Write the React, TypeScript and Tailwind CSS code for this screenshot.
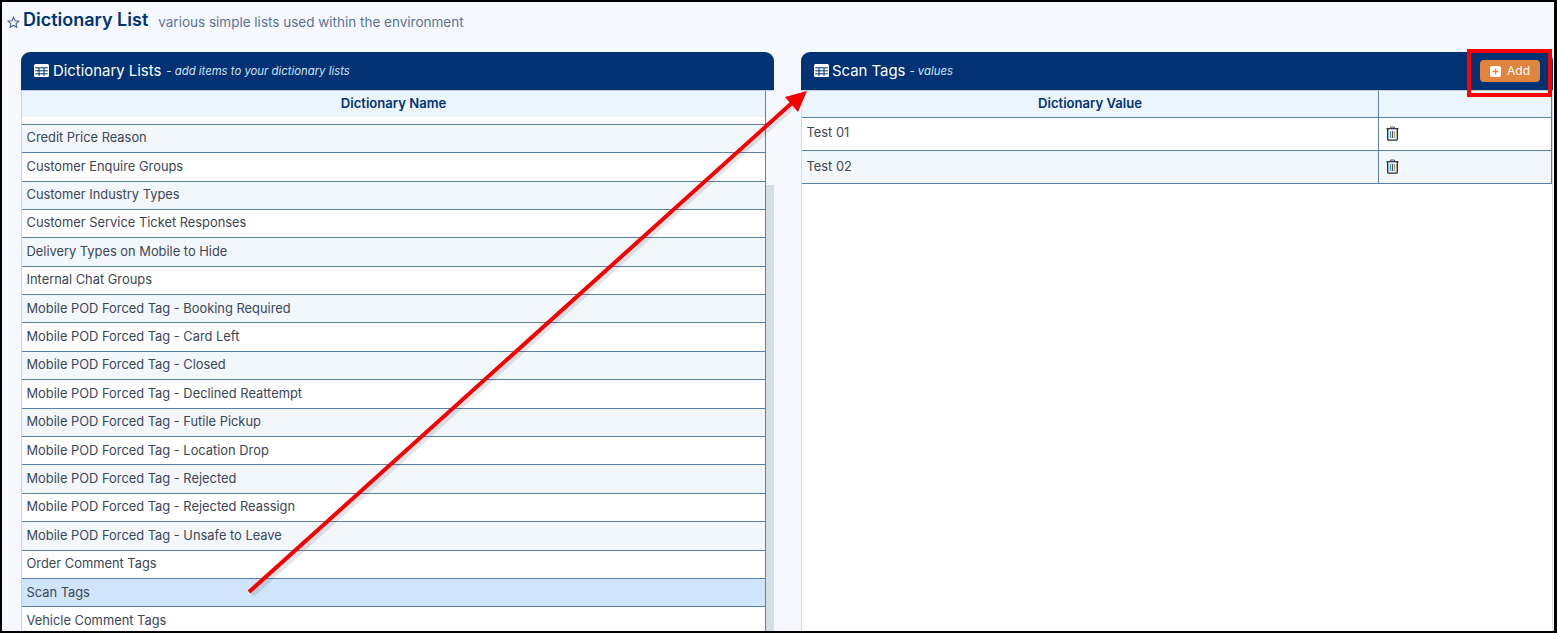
const rows = [
  "Credit Price Reason",
  "Customer Enquire Groups",
  "Customer Industry Types",
  "Customer Service Ticket Responses",
  "Delivery Types on Mobile to Hide",
  "Internal Chat Groups",
  "Mobile POD Forced Tag - Booking Required",
  "Mobile POD Forced Tag - Card Left",
  "Mobile POD Forced Tag - Closed",
  "Mobile POD Forced Tag - Declined Reattempt",
  "Mobile POD Forced Tag - Futile Pickup",
  "Mobile POD Forced Tag - Location Drop",
  "Mobile POD Forced Tag - Rejected",
  "Mobile POD Forced Tag - Rejected Reassign",
  "Mobile POD Forced Tag - Unsafe to Leave",
  "Order Comment Tags",
  "Scan Tags",
  "Vehicle Comment Tags",
];

function TableIcon() {
  return (
    <svg width="15" height="13" viewBox="0 0 15 13" className="shrink-0 -mt-[2px]" fill="none">
      <rect x="0" y="0" width="15" height="13" rx="1.5" fill="#ffffff" />
      <path d="M1.2 3.8H13.8M1.2 6.8H13.8M1.2 9.8H13.8M5 3.8V12M10 3.8V12" stroke="#003274" strokeWidth="1" />
    </svg>
  );
}

function Trash() {
  return (
    <svg width="13" height="15" viewBox="0 0 13 15" fill="none">
      <path d="M4.5 2.2V1H8.5V2.2" stroke="#4b5563" strokeWidth="1" />
      <path d="M0.5 2.7H12.5" stroke="#1f2937" strokeWidth="1.2" />
      <path d="M1.7 3V13.2C1.7 13.8 2.1 14.2 2.7 14.2H10.3C10.9 14.2 11.3 13.8 11.3 13.2V3" stroke="#1f2937" strokeWidth="1.3" />
      <path d="M4.4 5V12" stroke="#2f9fe0" strokeWidth="1.2" />
      <path d="M6.5 5V12" stroke="#3b4a9b" strokeWidth="1.2" />
      <path d="M8.6 5V12" stroke="#d09a3e" strokeWidth="1.2" />
    </svg>
  );
}

export default function App() {
  return (
    <div className="relative h-[633px] w-[1557px] overflow-hidden border-t-2 border-r-[3px] border-b-2 border-l-2 border-black bg-[#f5f9ff] font-['Inter',sans-serif]">
      <div className="flex h-[50px] items-start pl-[5px] pt-[6px]">
        <svg width="13" height="13" viewBox="0 0 24 24" fill="none" stroke="#4a5f80" strokeWidth="2" className="mt-[8px] mr-[3px] shrink-0">
          <path d="M12 2.5l2.9 6.2 6.8.8-5 4.6 1.3 6.7-6-3.3-6 3.3 1.3-6.7-5-4.6 6.8-.8z" />
        </svg>
        <span className="text-[18px] leading-[24px] font-semibold text-[#003274]">Dictionary List</span>
        <span className="ml-[10px] mt-[4px] text-[13.5px] leading-[20px] text-[#5b7391]">various simple lists used within the environment</span>
      </div>

      <div className="flex h-[580px] items-start pl-[19px]">
        <section className="w-[753px] shrink-0">
          <header className="flex h-[39px] items-center gap-[4px] rounded-t-[9px] border-b border-[#c6ccd4] bg-[#003274] pl-[13px] text-white">
            <TableIcon />
            <span className="text-[14.9px] leading-5 -mt-[1px]">Dictionary Lists</span>
            <span className="ml-[1px] mt-[1px] text-[11.35px] italic text-[#d5e4f5]">- add items to your dictionary lists</span>
          </header>
          <div className="flex">
            <div className="w-[745px] shrink-0 border-l border-r border-[#c9d2dd] border-r-[#5b80ad]">
              <div className="flex h-[26px] items-center justify-center bg-[#eaf5fe] text-[13.1px] font-semibold text-[#003274]">Dictionary Name</div>
              <div className="h-[6.75px] bg-white" />
              {rows.map((r, i) => (
                <div
                  key={r}
                  className={`flex h-[28.4px] items-center border-t border-[#5b80ad] pl-[4.5px] pb-[1px] text-[12.87px] text-[#3b4656] ${
                    r === "Scan Tags" ? "bg-[#d0e4fa]" : i % 2 === 0 ? "bg-[#f2f7fc]" : "bg-white"
                  }`}
                >
                  {r}
                </div>
              ))}
            </div>
            <div className="w-[8px] shrink-0 pt-[94px]">
              <div className="h-[460px] bg-[#d5dde7]" />
            </div>
          </div>
        </section>

        <section className="ml-[27px] w-[752px] shrink-0">
          <header className="flex h-[39px] items-center gap-[3px] rounded-t-[9px] border-b border-[#c6ccd4] bg-[#003274] pl-[13px] text-white">
            <TableIcon />
            <span className="text-[14.9px] leading-5 -mt-[1px]">Scan Tags</span>
            <span className="ml-[1px] mt-[1px] text-[11.35px] italic text-[#d5e4f5]">- values</span>
            <button className="mr-[13px] ml-auto flex h-[22px] w-[60px] items-center justify-center gap-[6px] rounded-[4px] bg-[#e0843e] text-[12px] text-white">
              <svg width="11" height="11" viewBox="0 0 11 11">
                <rect width="11" height="11" rx="2" fill="#ffffff" />
                <path d="M5.5 2.5V8.5M2.5 5.5H8.5" stroke="#e0843e" strokeWidth="1.3" />
              </svg>
              Add
            </button>
          </header>
          <div className="h-[560px] border-r border-l border-[#d5dde7] bg-white">
            <div className="flex h-[27px] border-b border-[#5b80ad] bg-[#eaf5fe]">
              <div className="flex w-[577px] items-center justify-center border-r border-[#5b80ad] text-[13.1px] font-semibold text-[#003274]">Dictionary Value</div>
              <div className="flex-1 border-r border-[#5b80ad]" />
            </div>
            {["Test 01", "Test 02"].map((t, i) => (
              <div key={t} className={`flex h-[33px] border-b border-[#5b80ad] text-[12.87px] text-[#3b4656] ${i === 1 ? "bg-[#f2f7fc]" : "bg-white"}`}>
                <div className={`flex w-[577px] items-center border-r border-[#5b80ad] pl-[4.5px] ${i === 0 ? "pb-[3px]" : "pb-[1px]"}`}>{t}</div>
                <div className="flex flex-1 items-center border-r border-[#5b80ad] pl-[6.5px] pb-[2px]"><Trash /></div>
              </div>
            ))}
          </div>
        </section>
      </div>

      <div className="absolute left-[1465px] top-[47px] h-[48px] w-[85px] border-[4px] border-[#ff0000]" />

      <svg className="absolute left-[-2px] top-[-2px]" width="1557" height="633" fill="none">
        <path d="M252 595 L795 105" stroke="#000" strokeOpacity="0.1" strokeWidth="5" />
        <path d="M249 592 L793 102" stroke="#f40000" strokeWidth="4" />
        <path d="M807 91 L785 97 L798 112 Z" fill="#f40000" />
      </svg>
    </div>
  );
}
